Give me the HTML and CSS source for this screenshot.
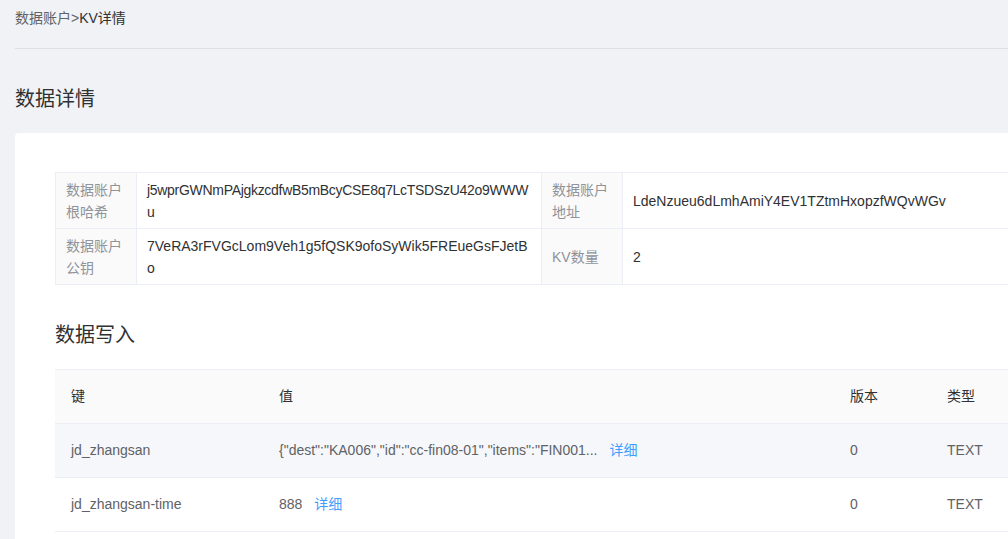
FILE: index.html
```html
<!DOCTYPE html>
<html lang="zh-CN">
<head>
<meta charset="utf-8">
<title>KV详情</title>
<link rel="stylesheet" href="styles.css">
</head>
<body>
<div class="page">
  <div class="breadcrumb"><span class="crumb">数据账户</span><span class="sep">&gt;</span><span class="crumb-current">KV详情</span></div>
  <h2 class="page-title">数据详情</h2>
  <div class="card">
    <table class="desc">
      <colgroup><col class="c-label"><col class="c-value1"><col class="c-label"><col></colgroup>
      <tr>
        <th>数据账户根哈希</th>
        <td class="tight">j5wprGWNmPAjgkzcdfwB5mBcyCSE8q7LcTSDSzU42o9WWWu</td>
        <th>数据账户地址</th>
        <td>LdeNzueu6dLmhAmiY4EV1TZtmHxopzfWQvWGv</td>
      </tr>
      <tr>
        <th>数据账户公钥</th>
        <td>7VeRA3rFVGcLom9Veh1g5fQSK9ofoSyWik5FREueGsFJetBo</td>
        <th>KV数量</th>
        <td>2</td>
      </tr>
    </table>

    <h3 class="section-title">数据写入</h3>

    <table class="data">
      <colgroup><col class="d1"><col class="d2"><col class="d3"><col></colgroup>
      <thead>
        <tr><th>键</th><th>值</th><th>版本</th><th>类型</th></tr>
      </thead>
      <tbody>
        <tr class="hover">
          <td>jd_zhangsan</td>
          <td>{"dest":"KA006","id":"cc-fin08-01","items":"FIN001...<a class="link">详细</a></td>
          <td>0</td>
          <td>TEXT</td>
        </tr>
        <tr>
          <td>jd_zhangsan-time</td>
          <td>888<a class="link">详细</a></td>
          <td>0</td>
          <td>TEXT</td>
        </tr>
      </tbody>
    </table>
  </div>
</div>
</body>
</html>
```

FILE: styles.css
```css
html, body {
  margin: 0;
  padding: 0;
  background: #f0f2f5;
  overflow: hidden;
}
body {
  font-family: "Liberation Sans", "Noto Sans CJK SC", sans-serif;
  font-size: 14px;
  color: #606266;
}
.page {
  width: 1200px;
  padding: 0 0 0 15px;
}
.breadcrumb {
  padding-top: 8px;
  padding-bottom: 20px;
  line-height: 20px;
  border-bottom: 1px solid #dcdfe6;
  font-size: 14px;
}
.crumb, .sep { color: #606266; }
.crumb-current { color: #303133; }
.page-title {
  margin: 36px 0 20px;
  font-size: 20px;
  line-height: 28px;
  font-weight: normal;
  color: #303133;
}
.card {
  background: #fff;
  border-radius: 4px;
  padding: 39px 40px 40px;
}
.desc {
  width: 100%;
  border-collapse: collapse;
  table-layout: fixed;
}
.desc col.c-label { width: 81px; }
.desc col.c-value1 { width: 405px; }
.desc th, .desc td {
  border: 1px solid #ebeef5;
  padding: 6px 10px 5px;
  line-height: 22px;
  text-align: left;
  vertical-align: middle;
  word-break: break-all;
}
.desc th {
  background: #fafafa;
  color: #909399;
  font-weight: normal;
}
.desc td {
  color: #303133;
}
.desc td.tight {
  letter-spacing: -0.3px;
}
.section-title {
  margin: 36px 0 20px;
  font-size: 20px;
  line-height: 28px;
  font-weight: normal;
  color: #303133;
}
.data {
  width: 100%;
  border-collapse: collapse;
  table-layout: fixed;
}
.data col.d1 { width: 208px; }
.data col.d2 { width: 571px; }
.data col.d3 { width: 97px; }
.data th, .data td {
  padding: 16px;
  line-height: 21px;
  text-align: left;
  border-bottom: 1px solid #ebeef5;
  white-space: nowrap;
}
.data thead th {
  background: #fafafa;
  border-top: 1px solid #ebeef5;
  color: #303133;
  font-weight: normal;
}
.data td { color: #606266; }
.data tr.hover td { background: #f5f7fa; }
.link {
  color: #409eff;
  margin-left: 12px;
  cursor: pointer;
}
```
